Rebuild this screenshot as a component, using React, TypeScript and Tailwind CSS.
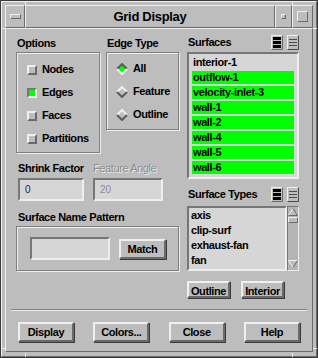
import React from 'react'

const raised = 'border-t-[#f0f0f0] border-l-[#f0f0f0] border-b-[#6a6a6a] border-r-[#6a6a6a]'
const sunken = 'border-t-[#767676] border-l-[#767676] border-b-[#eeeeee] border-r-[#eeeeee]'
const etched = 'border border-[#7f7f7f] shadow-[1px_1px_0_#eeeeee,inset_1px_1px_0_#eeeeee]'

const surfaces = [
  { name: 'interior-1', on: false },
  { name: 'outflow-1', on: true },
  { name: 'velocity-inlet-3', on: true },
  { name: 'wall-1', on: true },
  { name: 'wall-2', on: true },
  { name: 'wall-4', on: true },
  { name: 'wall-5', on: true },
  { name: 'wall-6', on: true },
]

const surfaceTypes = ['axis', 'clip-surf', 'exhaust-fan', 'fan']

function Check({ label, checked }: { label: string; checked?: boolean }) {
  return (
    <div className="flex h-[23px] items-center pl-[10px]">
      <span
        className={`box-border h-[10px] w-[10px] border-2 ${
          checked ? `${sunken} bg-[#00ff00]` : `${raised} bg-[#bdbdbd]`
        }`}
      />
      <span className="ml-[5px]">{label}</span>
    </div>
  )
}

function Radio({ label, checked }: { label: string; checked?: boolean }) {
  const top = checked ? '#5a5a5a' : '#f0f0f0'
  const bottom = checked ? '#f0f0f0' : '#5a5a5a'
  return (
    <div className="flex h-[23px] items-center pl-[9px]">
      <svg width="12" height="12" viewBox="0 0 12 12">
        <polygon points="6,1 11,6 6,11 1,6" fill={checked ? '#00ff00' : '#bdbdbd'} />
        <path d="M1,6 L6,1 L11,6" fill="none" stroke={top} strokeWidth="2" />
        <path d="M1,6 L6,11 L11,6" fill="none" stroke={bottom} strokeWidth="2" />
      </svg>
      <span className="ml-[5px]">{label}</span>
    </div>
  )
}

function ViewIcons() {
  return (
    <div className="flex gap-[4px]">
      <svg width="12" height="15" viewBox="0 0 12 15">
        <rect x="0" y="0" width="12" height="15" fill="#bdbdbd" />
        <rect x="2" y="2" width="8" height="3" fill="#000" />
        <rect x="2" y="6" width="8" height="3" fill="#000" />
        <rect x="2" y="10" width="8" height="3" fill="#000" />
        <path d="M0.5,14.5 L0.5,0.5 L11.5,0.5" fill="none" stroke="#f0f0f0" />
        <path d="M0.5,14.5 L11.5,14.5 L11.5,0.5" fill="none" stroke="#6a6a6a" />
      </svg>
      <svg width="12" height="15" viewBox="0 0 12 15">
        <rect x="0" y="0" width="12" height="15" fill="#bdbdbd" />
        <path d="M2,4.5 H10 M2,7.5 H10 M2,10.5 H10" stroke="#4a4a4a" />
        <path d="M0.5,14.5 L0.5,0.5 L11.5,0.5" fill="none" stroke="#f0f0f0" />
        <path d="M0.5,14.5 L11.5,14.5 L11.5,0.5" fill="none" stroke="#4a4a4a" />
      </svg>
    </div>
  )
}

function Btn({ label, w, h }: { label: string; w: string; h: string }) {
  return (
    <button className={`${w} ${h} box-border border-2 ${raised} bg-[#bdbdbd] font-bold text-black shadow-[1px_1px_0_#3a3a3a]`}>
      {label}
    </button>
  )
}

export default function App() {
  return (
    <div className="relative box-border h-[358px] w-[318px] border border-[#3a3a3a] bg-[#bdbdbd] text-[11px] font-bold tracking-[-0.4px] text-black [font-family:Liberation_Sans,Arial,sans-serif]">
      <div className={`box-border flex h-full flex-col border ${raised} px-[3px] pb-[4px] pt-[3px]`}>
        {/* title bar */}
        <div className="flex h-[23px] shrink-0">
          <div className={`box-border flex w-[20px] items-center justify-center border ${raised}`}>
            <span className={`box-border h-[5px] w-[11px] border ${raised}`} />
          </div>
          <div className={`box-border flex w-[250px] items-center justify-center border ${raised} text-[13px] tracking-[-0.3px]`}>
            Grid Display
          </div>
          <div className={`box-border flex w-[17px] items-center justify-center border ${raised}`}>
            <span className={`box-border h-[5px] w-[5px] border ${raised}`} />
          </div>
          <div className={`box-border flex w-[21px] items-center justify-center border ${raised}`}>
            <span className={`box-border h-[11px] w-[11px] border ${raised}`} />
          </div>
        </div>

        {/* client area */}
        <div className={`box-border flex flex-1 flex-col border ${raised} pt-[7px]`}>
          <div className="flex pl-[10px]">
            {/* left column */}
            <div className="flex w-[163px] flex-col">
              <div className="flex">
                <div className="flex w-[84px] flex-col">
                  <div className="flex h-[15px] items-center pl-px">Options</div>
                  <div className={`mt-px box-border h-[101px] pt-[5px] ${etched}`}>
                    <Check label="Nodes" />
                    <Check label="Edges" checked />
                    <Check label="Faces" />
                    <Check label="Partitions" />
                  </div>
                </div>
                <div className="ml-[6px] flex w-[73px] flex-col">
                  <div className="flex h-[15px] items-center pl-px">Edge Type</div>
                  <div className={`mt-px box-border h-[78px] pt-[4px] ${etched}`}>
                    <Radio label="All" checked />
                    <Radio label="Feature" />
                    <Radio label="Outline" />
                  </div>
                </div>
              </div>

              <div className="mt-[9px] flex pl-[2px]">
                <div className="flex w-[66px] flex-col">
                  <div className="flex h-[13px] items-center">Shrink Factor</div>
                  <div className={`mt-[3px] box-border flex h-[23px] items-center border-2 ${sunken} bg-[#d6d6d6] pl-[5px] text-[10px] font-normal tracking-normal text-[#222]`}>
                    0
                  </div>
                </div>
                <div className="ml-[9px] flex w-[70px] flex-col">
                  <div className="flex h-[13px] items-center whitespace-nowrap font-normal text-[#8c8c8c] [text-shadow:1px_1px_0_#ececec]">
                    Feature Angle
                  </div>
                  <div className={`mt-[3px] box-border flex h-[23px] items-center border-2 ${sunken} bg-[#d6d6d6] pl-[5px] text-[10px] font-normal tracking-normal text-[#8c8c8c]`}>
                    20
                  </div>
                </div>
              </div>

              <div className="mt-[10px] flex h-[13px] items-center pl-[2px]">Surface Name Pattern</div>
              <div className={`mt-[2px] box-border flex h-[45px] items-center pl-[13px] ${etched}`}>
                <div className={`box-border h-[23px] w-[80px] border-2 ${sunken} bg-[#d6d6d6]`} />
                <div className="ml-[9px]">
                  <Btn label="Match" w="w-[47px]" h="h-[20px]" />
                </div>
              </div>
            </div>

            {/* right column */}
            <div className="ml-[8px] flex w-[112px] flex-col">
              <div className="-mt-px flex h-[15px] items-center justify-between pl-px">
                <span>Surfaces</span>
                <ViewIcons />
              </div>
              <div className={`mt-[2px] box-border h-[127px] border-2 ${sunken} bg-[#d6d6d6] px-[3px] pt-px`}>
                {surfaces.map((s) => (
                  <div key={s.name} className="flex h-[15px] items-center">
                    <div className={`flex h-[13px] w-full items-center pl-px ${s.on ? 'bg-[#00ff00]' : ''}`}>
                      {s.name}
                    </div>
                  </div>
                ))}
              </div>

              <div className="mt-[8px] flex h-[15px] items-center justify-between pl-px">
                <span>Surface Types</span>
                <ViewIcons />
              </div>
              <div className="mt-[4px] flex h-[65px]">
                <div className={`box-border w-[100px] border-2 ${sunken} bg-[#d6d6d6] pl-[2px]`}>
                  {surfaceTypes.map((t) => (
                    <div key={t} className="flex h-[15px] items-center">
                      {t}
                    </div>
                  ))}
                </div>
                <div className={`box-border flex w-[12px] flex-col items-center border ${sunken} bg-[#b4b4b4]`}>
                  <svg width="10" height="8" viewBox="0 0 10 8" className="mt-px">
                    <polygon points="5,0.5 9.5,7.5 0.5,7.5" fill="#bdbdbd" />
                    <path d="M0.5,7.5 L5,0.5" stroke="#f0f0f0" fill="none" />
                    <path d="M5,0.5 L9.5,7.5 L0.5,7.5" stroke="#6a6a6a" fill="none" />
                  </svg>
                  <span className={`mt-px box-border h-[6px] w-[10px] border ${raised} bg-[#bdbdbd]`} />
                  <div className="flex-1" />
                  <svg width="10" height="8" viewBox="0 0 10 8" className="mb-[2px]">
                    <polygon points="0.5,0.5 9.5,0.5 5,7.5" fill="#bdbdbd" />
                    <path d="M5,7.5 L0.5,0.5 L9.5,0.5" stroke="#f0f0f0" fill="none" />
                    <path d="M9.5,0.5 L5,7.5" stroke="#6a6a6a" fill="none" />
                  </svg>
                </div>
              </div>

              <div className="mt-[10px] flex">
                <Btn label="Outline" w="w-[43px]" h="h-[17px]" />
                <div className="ml-[11px]">
                  <Btn label="Interior" w="w-[43px]" h="h-[17px]" />
                </div>
              </div>
            </div>
          </div>

          <div className="mx-[5px] mt-[9px] h-[2px] border-t border-b border-t-[#7f7f7f] border-b-[#eeeeee]" />

          <div className="mt-[11px] flex justify-between px-[12px]">
            <Btn label="Display" w="w-[56px]" h="h-[20px]" />
            <Btn label="Colors..." w="w-[56px]" h="h-[20px]" />
            <Btn label="Close" w="w-[56px]" h="h-[20px]" />
            <Btn label="Help" w="w-[56px]" h="h-[20px]" />
          </div>
        </div>
      </div>

      {/* frame resize-corner notches */}
      <span className="absolute left-[24px] top-0 h-[4px] w-px bg-[#eeeeee]" />
      <span className="absolute left-[291px] top-0 h-[4px] w-px bg-[#eeeeee]" />
      <span className="absolute bottom-0 left-[24px] h-[4px] w-px bg-[#eeeeee]" />
      <span className="absolute bottom-0 left-[291px] h-[4px] w-px bg-[#eeeeee]" />
      <span className="absolute left-0 top-[27px] h-px w-[4px] bg-[#eeeeee]" />
      <span className="absolute right-0 top-[27px] h-px w-[4px] bg-[#eeeeee]" />
      <span className="absolute bottom-[8px] left-0 h-px w-[4px] bg-[#eeeeee]" />
      <span className="absolute bottom-[8px] right-0 h-px w-[4px] bg-[#eeeeee]" />
    </div>
  )
}
